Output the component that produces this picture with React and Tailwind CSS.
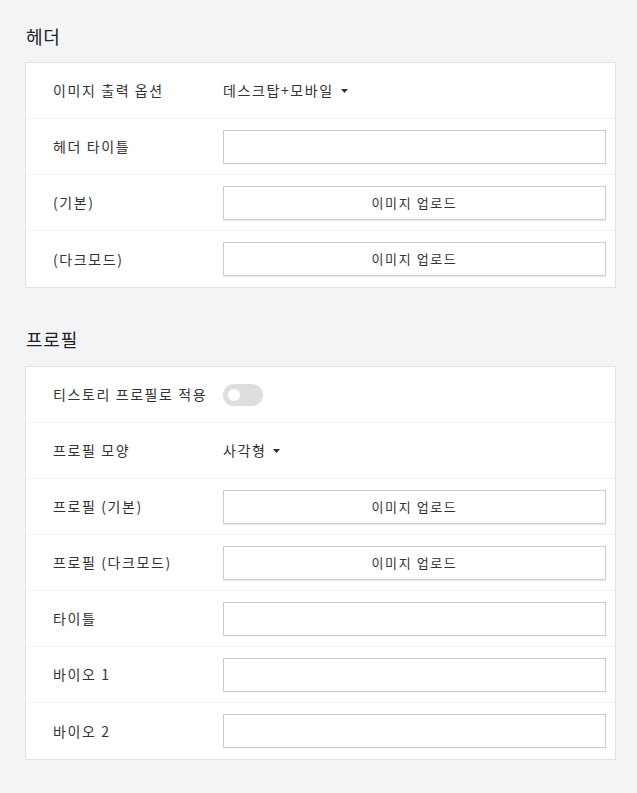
import React from 'react';

const font = { fontFamily: '"Noto Sans CJK KR", "Noto Sans", sans-serif' };

const Row = ({ label, children, last }) => (
    <div className={`flex items-center h-[56px] pl-[27px] pr-[9px] ${last ? '' : 'border-b border-[#f0f1f3]'}`}>
        <div className="w-[170px] shrink-0 text-[14px] tracking-[1.6px] text-[#333]">{label}</div>
        <div className="flex-1 flex items-center">{children}</div>
    </div>
);

const Input = () => (
    <div className="w-full h-[34px] border border-[#c9cdd3] bg-white"></div>
);

const UploadButton = () => (
    <button className="w-full h-[34px] border border-[#c9cdd3] bg-white text-[13px] tracking-[1.6px] text-[#333] shadow-[0_1px_1px_rgba(0,0,0,0.08)]">
        이미지 업로드
    </button>
);

const Select = ({ value }) => (
    <div className="flex items-center gap-[7px] text-[14px] tracking-[1.6px] text-[#333]">
        <span>{value}</span>
        <svg width="7" height="4" viewBox="0 0 7 4"><path d="M0 0h7L3.5 4z" fill="#333" /></svg>
    </div>
);

const Toggle = () => (
    <div className="w-[40px] h-[22px] rounded-full bg-[#dedede] flex items-center pl-[5px]">
        <div className="w-[12px] h-[12px] rounded-full bg-white"></div>
    </div>
);

const App = () => {
    return (
        <div className="min-h-screen bg-[#f3f4f6] pb-10" style={font}>
            {/* 헤더 */}
            <h2 className="pt-[24px] pl-[26px] text-[18px] leading-[24px] tracking-[0.8px] font-normal text-[#222] mb-[14px]">헤더</h2>
            <div className="ml-[25px] w-[591px] bg-white border border-[#e2e4ea]">
                <Row label="이미지 출력 옵션"><Select value="데스크탑+모바일" /></Row>
                <Row label="헤더 타이틀"><Input /></Row>
                <Row label="(기본)"><UploadButton /></Row>
                <Row label="(다크모드)" last><UploadButton /></Row>
            </div>

            {/* 프로필 */}
            <h2 className="mt-[39px] pl-[26px] text-[18px] leading-[24px] tracking-[0.8px] font-normal text-[#222] mb-[15px]">프로필</h2>
            <div className="ml-[25px] w-[591px] bg-white border border-[#e2e4ea]">
                <Row label="티스토리 프로필로 적용"><Toggle /></Row>
                <Row label="프로필 모양"><Select value="사각형" /></Row>
                <Row label="프로필 (기본)"><UploadButton /></Row>
                <Row label="프로필 (다크모드)"><UploadButton /></Row>
                <Row label="타이틀"><Input /></Row>
                <Row label="바이오 1"><Input /></Row>
                <Row label="바이오 2" last><Input /></Row>
            </div>
        </div>
    );
};

export default App;
